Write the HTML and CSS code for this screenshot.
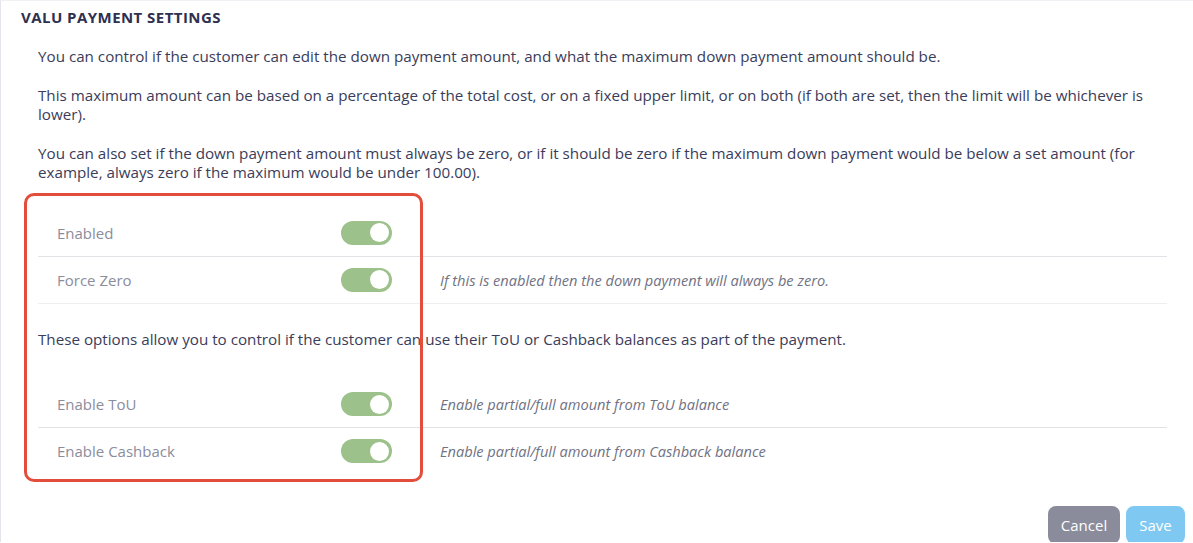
FILE: index.html
```html
<!DOCTYPE html>
<html>
<head>
<meta charset="utf-8">
<link rel="stylesheet" href="styles.css">
</head>
<body>
<div class="card">
  <h2 class="title">VALU PAYMENT SETTINGS</h2>
  <div class="content">
    <p>You can control if the customer can edit the down payment amount, and what the maximum down payment amount should be.</p>
    <p>This maximum amount can be based on a percentage of the total cost, or on a fixed upper limit, or on both (if both are set, then the limit will be whichever is lower).</p>
    <p>You can also set if the down payment amount must always be zero, or if it should be zero if the maximum down payment would be below a set amount (for example, always zero if the maximum would be under 100.00).</p>
    <div class="group first">
      <div class="row">
        <span class="label">Enabled</span>
        <span class="toggle"><span class="knob"></span></span>
        <span class="desc"></span>
      </div>
      <div class="row light">
        <span class="label">Force Zero</span>
        <span class="toggle"><span class="knob"></span></span>
        <span class="desc">If this is enabled then the down payment will always be zero.</span>
      </div>
    </div>
    <p class="mid">These options allow you to control if the customer can use their ToU or Cashback balances as part of the payment.</p>
    <div class="group second">
      <div class="row">
        <span class="label">Enable ToU</span>
        <span class="toggle"><span class="knob"></span></span>
        <span class="desc">Enable partial/full amount from ToU balance</span>
      </div>
      <div class="row nob">
        <span class="label">Enable Cashback</span>
        <span class="toggle"><span class="knob"></span></span>
        <span class="desc">Enable partial/full amount from Cashback balance</span>
      </div>
    </div>
    <div class="highlight"></div>
  </div>
  <div class="actions">
    <button class="btn cancel">Cancel</button>
    <button class="btn save">Save</button>
  </div>
</div>
</body>
</html>
```
FILE: styles.css
```css
html, body {
  margin: 0;
  padding: 0;
  background: #ffffff;
}
body {
  font-family: "Open Sans", "Liberation Sans", sans-serif;
  color: #3a3c5a;
}
.card {
  border-left: 1px solid #e4e5ea;
  border-top: 1px solid #eef0f4;
  height: 542px;
  box-sizing: border-box;
  position: relative;
}
.title {
  margin: 0;
  padding: 7px 0 0 20px;
  font-size: 15px;
  font-weight: 700;
  color: #2e3050;
  line-height: 18px;
  letter-spacing: 0.45px;
}
.content {
  position: relative;
  padding: 21px 26px 0 37px;
}
.content p {
  margin: 0 0 19px 0;
  font-size: 15.2px;
  line-height: 19.5px;
}
.group.first {
  margin-top: 27px;
}
.row {
  display: flex;
  align-items: center;
  height: 46px;
  border-bottom: 1px solid #e2e3e6;
}
.row.light {
  border-bottom-color: #eeeff1;
}
.row.nob {
  border-bottom: none;
}
.label {
  width: 303px;
  flex: 0 0 303px;
  box-sizing: border-box;
  padding-left: 19px;
  font-size: 15px;
  color: #8b8c9c;
}
.toggle {
  width: 51px;
  flex: 0 0 51px;
  height: 24px;
  border-radius: 12px;
  background: #9cc18b;
  display: flex;
  align-items: center;
  justify-content: flex-end;
  padding-right: 3px;
  box-sizing: border-box;
}
.knob {
  width: 19px;
  height: 19px;
  border-radius: 50%;
  background: #ffffff;
}
.desc {
  margin-left: 48px;
  font-style: italic;
  font-size: 14.6px;
  color: #707283;
}
.content p.mid {
  margin: 26px 0 32px 0;
}
.highlight {
  position: absolute;
  left: 23px;
  top: 167px;
  width: 399px;
  height: 289px;
  border: 3px solid #e34d3c;
  border-radius: 10px;
  box-sizing: border-box;
  pointer-events: none;
}
.actions {
  position: absolute;
  right: 8px;
  top: 505px;
  display: flex;
  gap: 6px;
}
.btn {
  border: none;
  border-radius: 8px;
  color: #ffffff;
  font-family: "Open Sans", "Liberation Sans", sans-serif;
  font-size: 15px;
  height: 38px;
  padding: 0 12px;
}
.cancel {
  background: #8a8b9b;
  width: 72px;
}
.save {
  background: #7ec8f2;
  width: 59px;
}
```
